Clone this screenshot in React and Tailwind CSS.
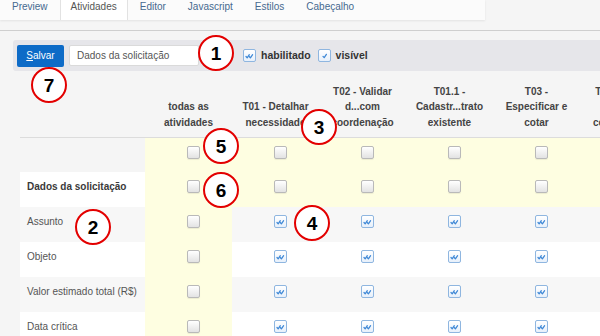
import React from 'react';

const tabs = ['Preview', 'Atividades', 'Editor', 'Javascript', 'Estilos', 'Cabeçalho'];

const columns = [
  ['todas as', 'atividades'],
  ['T01 - Detalhar', 'necessidade'],
  ['T02 - Validar', 'd...com', 'coordenação'],
  ['T01.1 -', 'Cadastr...trato', 'existente'],
  ['T03 -', 'Especificar e', 'cotar'],
  ['T04 - Enviar', 'p/', 'cotação final'],
];

const rows = [
  { label: '', kind: 'all', h: 'h-[34px]' },
  { label: 'Dados da solicitação', kind: 'group', h: 'h-[35px]' },
  { label: 'Assunto', kind: 'odd', h: 'h-[35px]' },
  { label: 'Objeto', kind: 'even', h: 'h-[35px]' },
  { label: 'Valor estimado total (R$)', kind: 'odd', h: 'h-[35px]' },
  { label: 'Data crítica', kind: 'even', h: 'h-[35px]' },
];

// annotation bubbles (top-left of each 36px circle)
const marks = [
  { n: '1', cls: 'left-[198px] top-[35px]' },
  { n: '7', cls: 'left-[31px] top-[67px]' },
  { n: '2', cls: 'left-[75px] top-[209px]' },
  { n: '3', cls: 'left-[301px] top-[109px]' },
  { n: '4', cls: 'left-[294px] top-[205px]' },
  { n: '5', cls: 'left-[203px] top-[128px]' },
  { n: '6', cls: 'left-[203px] top-[172px]' },
];

function Box({ checked, single }) {
  if (!checked) {
    return (
      <div className="w-[13px] h-[13px] rounded-[2px] border border-[#b9b9b9] bg-linear-to-b from-white to-[#e3e3e3] shadow-[0_1px_1px_rgba(0,0,0,0.07)]" />
    );
  }
  return (
    <div className="w-[13px] h-[13px] rounded-[2px] border border-[#8fb6e0] bg-linear-to-b from-white to-[#e7f0fb] flex items-center justify-center">
      <svg width="11" height="11" viewBox="0 0 11 11" fill="none" stroke="#3f88d6" strokeWidth="1.25" strokeLinecap="round" strokeLinejoin="round">
        {single ? (
          <path d="M4 6.4 L5.2 7.7 L7.4 4.3" />
        ) : (
          <>
            <path d="M2 6.5 L3.2 7.8 L5.3 4.7" />
            <path d="M5.2 6.5 L6.4 7.8 L8.6 4.7" />
          </>
        )}
      </svg>
    </div>
  );
}

function Mark({ n, cls }) {
  return (
    <div className={`absolute ${cls} w-[36px] h-[36px] rounded-full border-[2.5px] border-[#e30000] bg-white flex items-center justify-center text-[19px] font-bold text-black leading-none`}>
      {n}
    </div>
  );
}

export default function App() {
  return (
    <div className="relative w-[600px] h-[336px] overflow-hidden bg-[#f5f5f5] font-['Liberation_Sans',Arial,sans-serif]">
      {/* tabs */}
      <div className="flex h-[20px] w-[485px] bg-[#fbfbfb] shadow-[0_1px_2px_rgba(0,0,0,0.08)] pl-[2px] gap-[2px]">
        {tabs.map((t) =>
          t === 'Atividades' ? (
            <div key={t} className="px-[10px] bg-white border-x border-[#e2e2e2] text-[10px] leading-[14px] text-[#555]">
              {t}
            </div>
          ) : (
            <div key={t} className="px-[10px] text-[10px] leading-[14px] text-[#46698f]">
              {t}
            </div>
          )
        )}
      </div>

      <div className="mt-[10px] border-t border-[#cfcfcf] pt-[9px]">
        {/* toolbar */}
        <div className="ml-[13px] h-[31px] bg-[#e6e6ea] rounded-l-[3px] flex items-center pl-[4px]">
          <button className="h-[22px] w-[47px] rounded-[2px] bg-[#0d6bc7] text-white text-[10px]">
            <span className="underline">S</span>alvar
          </button>
          <div className="ml-[5px] h-[21px] w-[130px] bg-white border border-[#dadada] rounded-[2px] pl-[7px] flex items-center text-[10px] text-[#555]">
            Dados da solicitação
          </div>
          <div className="ml-[44px]">
            <Box checked />
          </div>
          <span className="ml-[5px] text-[10.5px] font-bold text-[#333]">habilitado</span>
          <div className="ml-[7px]">
            <Box checked single />
          </div>
          <span className="ml-[5px] text-[10.5px] font-bold text-[#333]">visível</span>
        </div>

        {/* permission table */}
        <div className="ml-[20px] w-[647px]">
          <div className="grid grid-cols-[125px_repeat(6,87px)] h-[67px] border-b border-[#dcdcdc] items-end pb-[7px]">
            <div />
            {columns.map((lines, i) => (
              <div key={i} className="text-center text-[10px] leading-[15.5px] font-bold text-[#444] whitespace-nowrap">
                {lines.map((l) => (
                  <div key={l}>{l}</div>
                ))}
              </div>
            ))}
          </div>

          {rows.map((r, ri) => {
            const rowBg =
              r.kind === 'odd' ? 'bg-[#f7f7f7]' : r.kind === 'all' ? 'bg-transparent' : 'bg-white';
            const allYellow = r.kind === 'all' || r.kind === 'group';
            return (
              <div key={ri} className={`grid grid-cols-[125px_repeat(6,87px)] ${r.h}`}>
                <div
                  className={`${rowBg} pl-[7px] pt-[8px] text-[10px] leading-[14px] whitespace-nowrap ${
                    r.kind === 'group' ? 'font-bold text-[#3a3a3a]' : 'text-[#555]'
                  }`}
                >
                  {r.label}
                </div>
                {columns.map((_, ci) => {
                  const yellow = allYellow || ci === 0;
                  return (
                    <div
                      key={ci}
                      className={`${yellow ? 'bg-[#fefee1]' : rowBg} flex justify-center pt-[8px] pl-[9px]`}
                    >
                      <Box checked={!yellow} />
                    </div>
                  );
                })}
              </div>
            );
          })}
        </div>
      </div>

      {marks.map((m) => (
        <Mark key={m.n} {...m} />
      ))}
    </div>
  );
}
